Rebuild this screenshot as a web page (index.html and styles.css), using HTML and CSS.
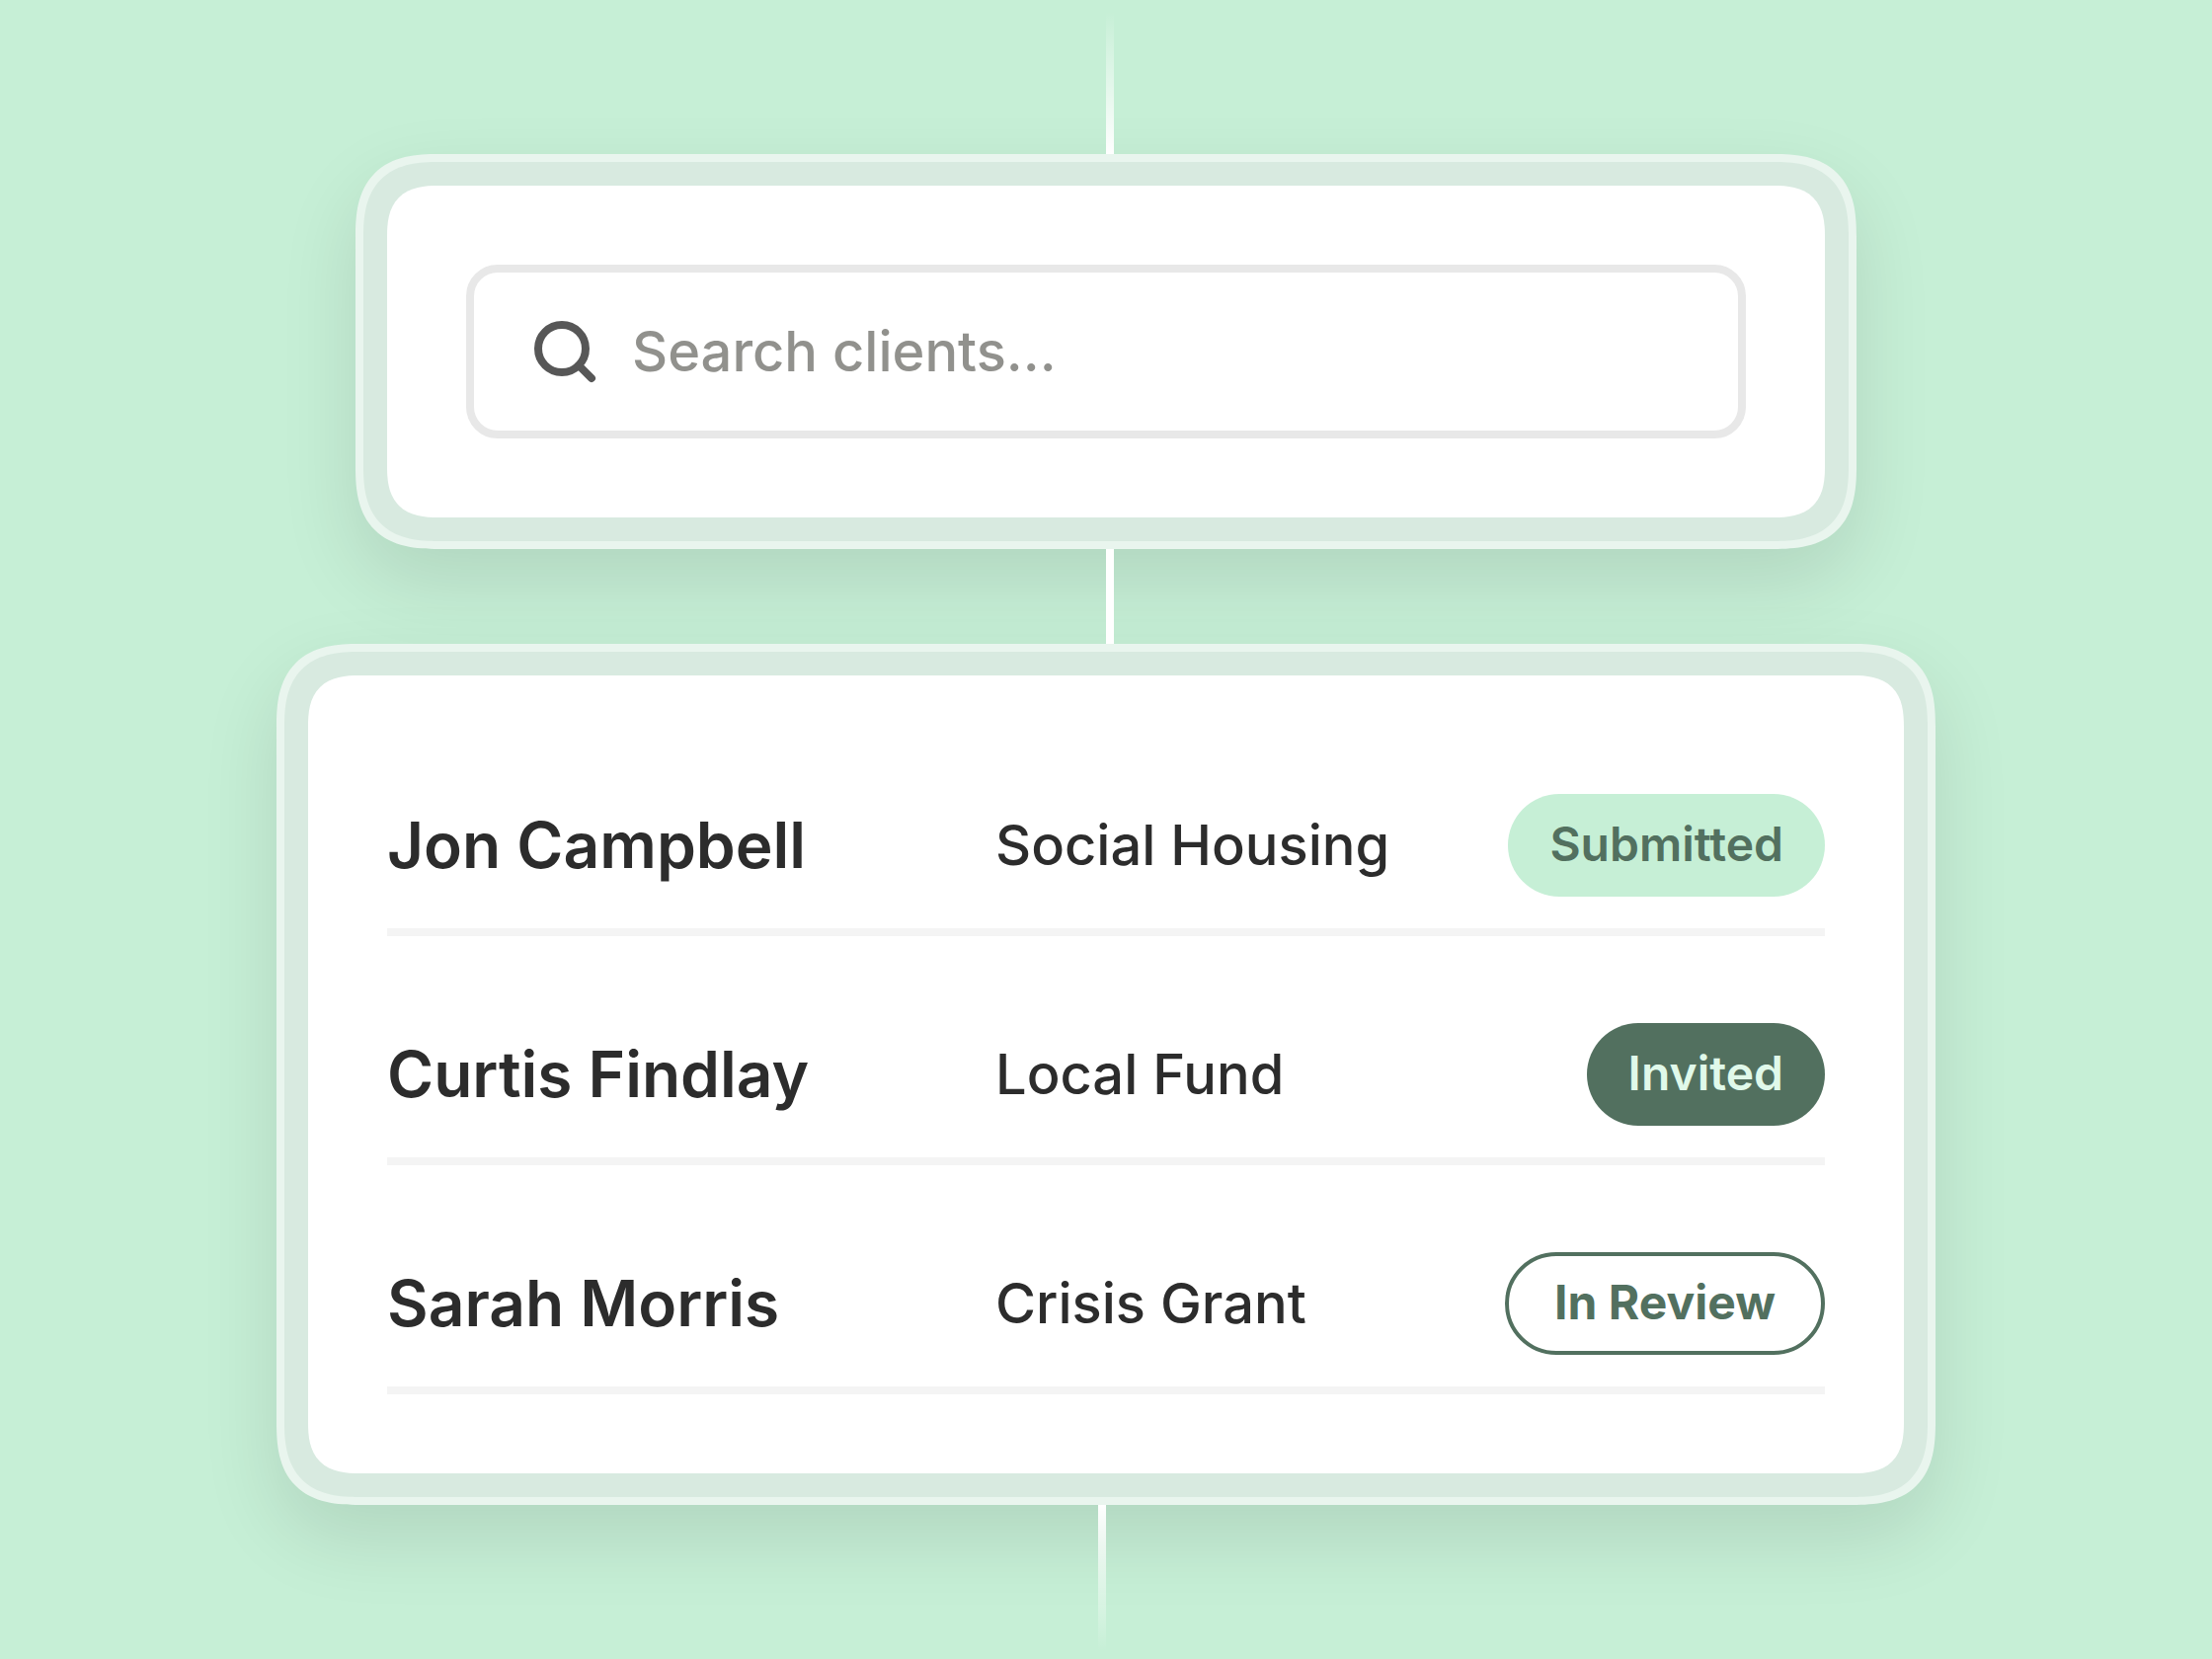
FILE: index.html
```html
<!DOCTYPE html>
<html lang="en">
<head>
  <meta charset="utf-8">
  <meta name="viewport" content="width=device-width, initial-scale=1">
  <title>Clients</title>
  <link rel="stylesheet" href="styles.css">
</head>
<body>
  <main class="flow">
    <div class="connector connector-in"></div>

    <section class="card card-search">
      <form class="card-body" role="search">
        <label class="search" for="client-search">
          <svg class="search-icon" viewBox="0 0 72 72" fill="none" stroke="currentColor" stroke-width="8" stroke-linecap="round" aria-hidden="true">
            <circle cx="33" cy="33" r="24"/>
            <path d="M50 50L63 63"/>
          </svg>
          <input class="search-input" id="client-search" type="text" placeholder="Search clients..." aria-label="Search clients">
        </label>
      </form>
    </section>

    <div class="connector connector-mid"></div>

    <section class="card">
      <div class="card-body">
        <table class="clients">
          <tbody>
            <tr>
              <th class="client-name" scope="row">Jon Campbell</th>
              <td class="client-program">Social Housing</td>
              <td><span class="badge badge-submitted">Submitted</span></td>
            </tr>
            <tr>
              <th class="client-name" scope="row">Curtis Findlay</th>
              <td class="client-program">Local Fund</td>
              <td><span class="badge badge-invited">Invited</span></td>
            </tr>
            <tr>
              <th class="client-name" scope="row">Sarah Morris</th>
              <td class="client-program">Crisis Grant</td>
              <td><span class="badge badge-review">In Review</span></td>
            </tr>
          </tbody>
        </table>
      </div>
    </section>

    <div class="connector connector-out"></div>
  </main>
</body>
</html>
```
FILE: styles.css
```css
:root {
  --mint: #c6efd6;
  --forest: #52705f;
  --ink: #2c2c2c;
}

* {
  box-sizing: border-box;
}

body {
  margin: 0;
  background: var(--mint);
  color: var(--ink);
  font-family: Inter, "Liberation Sans", sans-serif;
}

.flow {
  padding: 0 280px;
}

/* Vertical lines that join the cards */
.connector {
  position: relative;
  z-index: 1;
  width: 8px;
  margin-left: 50%;
}

.connector-in {
  height: 156px;
  background: linear-gradient(to bottom, rgb(255 255 255 / 0) 12px, #fff);
}

.connector-mid {
  height: 96px;
  background: #fff;
}

.connector-out {
  height: 156px;
  margin-left: calc(50% - 8px);
  background: linear-gradient(to bottom, #fff, rgb(255 255 255 / 0) 148px);
}

/* Cards */
.card {
  padding: 24px;
  border: 8px solid #e9f5ee;
  border-radius: 64px;
  background: #d8eae0;
  box-shadow: 0 32px 80px rgb(0 0 0 / 0.11);
}

.card-search {
  margin: 0 80px;
}

.card-body {
  padding: 80px;
  border-radius: 40px;
  background: #fff;
}

@supports (corner-shape: superellipse(1.4)) {
  .card {
    border-radius: 84px;
    corner-shape: superellipse(1.4);
  }

  .card-body {
    border-radius: 52px;
    corner-shape: superellipse(1.4);
  }
}

/* Search field */
.search {
  display: flex;
  align-items: center;
  gap: 32px;
  height: 176px;
  padding: 0 56px;
  border: 8px solid #e8e8e8;
  border-radius: 32px;
  cursor: text;
}

.search-icon {
  flex: none;
  width: 72px;
  height: 72px;
  color: #575757;
}

.search-input {
  flex: 1;
  min-width: 0;
  padding: 0;
  border: 0;
  outline: 0;
  background: transparent;
  color: var(--ink);
  font: 500 56px/72px Inter, "Liberation Sans", sans-serif;
}

.search-input::placeholder {
  color: #91918d;
  opacity: 1;
}

/* Client list */
.clients {
  width: 100%;
  border-spacing: 0;
}

.clients th,
.clients td {
  padding: 88px 0 32px;
  border-bottom: 8px solid #f4f4f4;
  text-align: left;
  vertical-align: middle;
  white-space: nowrap;
}

.clients tr:first-child > * {
  padding-top: 40px;
}

.client-name {
  width: 616px;
  font-size: 64px;
  font-weight: 600;
  line-height: 80px;
}

.client-program {
  font-size: 56px;
  font-weight: 500;
  line-height: 72px;
}

.badge {
  display: block;
  width: fit-content;
  margin-left: auto;
  padding: 21px 42px 23px;
  border-radius: 52px;
  font-size: 48px;
  font-weight: 600;
  line-height: 60px;
}

.badge-submitted {
  background: var(--mint);
  color: var(--forest);
}

.badge-invited {
  background: var(--forest);
  color: #e0f9ea;
}

.badge-review {
  padding: 17px 46px 19px;
  border: 4px solid var(--forest);
  color: var(--forest);
  font-weight: 700;
}
```
